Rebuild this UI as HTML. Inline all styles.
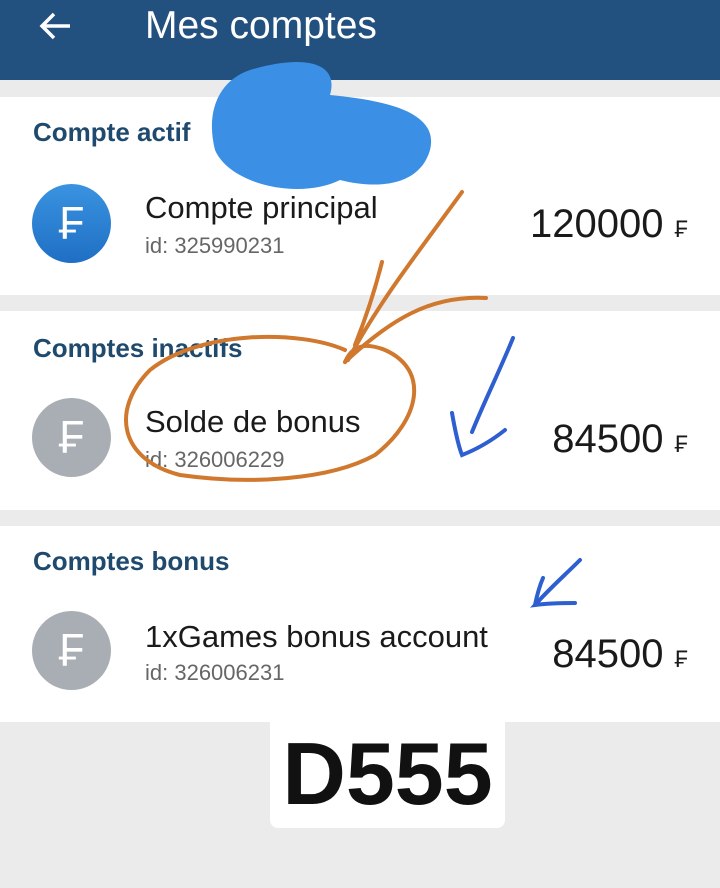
<!DOCTYPE html>
<html><head><meta charset="utf-8"><style>
*{margin:0;padding:0;box-sizing:border-box}
body{width:720px;height:888px;background:#ebebeb;font-family:"Liberation Sans",sans-serif;position:relative;overflow:hidden}
.hdr{position:absolute;left:0;top:0;width:720px;height:80px;background:#22507f}
.hdr .t{position:absolute;left:145px;top:4px;color:#fff;font-size:39px}
.card{position:absolute;left:0;width:720px;background:#fff}
.sec{position:absolute;left:33px;color:#1f4a6e;font-size:26px;font-weight:bold}
.circ{position:absolute;left:32px;width:79px;height:79px;border-radius:50%;color:#fff;font-size:46px;text-align:center;line-height:79px}
.name{position:absolute;left:145px;font-size:31px;color:#1a1a1a}
.id{position:absolute;left:145px;font-size:22px;color:#666}
.amt{position:absolute;right:32px;font-size:40px;color:#1a1a1a}
.amt span{font-size:24px}
.box{position:absolute;left:270px;top:722px;width:235px;height:106px;background:#fff;border-radius:0 0 8px 8px;font-size:88px;font-weight:bold;text-align:center;line-height:104px;color:#111}
</style></head><body>
<div class="hdr"><svg style="position:absolute;left:38px;top:10px" width="36" height="32" viewBox="0 0 36 32"><path d="M32 16H5M16 4L4 16l12 12" stroke="#fff" stroke-width="3.5" fill="none"/></svg><div class="t">Mes comptes</div></div>
<div class="card" style="top:97px;height:198px">
<div class="sec" style="top:20px">Compte actif</div>
<div class="circ" style="top:87px;background:linear-gradient(#3a93e0,#1f6fc4)">₣</div>
<div class="name" style="top:93px">Compte principal</div>
<div class="id" style="top:136px">id: 325990231</div>
<div class="amt" style="top:105px">120000 <span>₣</span></div>
</div>
<div class="card" style="top:311px;height:199px">
<div class="sec" style="top:22px">Comptes inactifs</div>
<div class="circ" style="top:87px;background:#a9aeb5">₣</div>
<div class="name" style="top:93px">Solde de bonus</div>
<div class="id" style="top:136px">id: 326006229</div>
<div class="amt" style="top:106px">84500 <span>₣</span></div>
</div>
<div class="card" style="top:526px;height:196px">
<div class="sec" style="top:20px">Comptes bonus</div>
<div class="circ" style="top:85px;background:#a9aeb5">₣</div>
<div class="name" style="top:93px">1xGames bonus account</div>
<div class="id" style="top:134px">id: 326006231</div>
<div class="amt" style="top:106px">84500 <span>₣</span></div>
</div>
<div class="box">D555</div>
<svg style="position:absolute;left:0;top:0" width="720" height="888">
<path d="M250 70 C300 55 340 60 330 95 C380 100 440 110 430 150 C420 185 380 190 340 180 C300 200 230 185 215 150 C205 110 220 80 250 70Z" fill="#3b8fe4"/>
<g stroke="#d0782e" stroke-width="4" fill="none" stroke-linecap="round">
<path d="M462 192 C420 250 380 300 348 360"/>
<path d="M382 262 C375 290 365 320 355 345"/>
<path d="M486 298 C430 295 390 320 345 362"/>
<path d="M345 350 C300 330 200 330 150 370 C110 410 120 460 180 475 C250 485 330 480 375 455 C420 420 430 370 385 350 C360 340 350 350 345 362"/>
</g>
<g stroke="#2e5fd0" stroke-width="4" fill="none" stroke-linecap="round">
<path d="M513 338 C500 370 485 400 472 432"/>
<path d="M452 413 C455 430 458 445 462 455 C480 448 495 438 505 430"/>
<path d="M580 560 C565 575 548 590 535 605 C550 603 565 603 575 603"/>
<path d="M535 605 C537 595 540 585 543 578"/>
</g>
</svg>
</body></html>
